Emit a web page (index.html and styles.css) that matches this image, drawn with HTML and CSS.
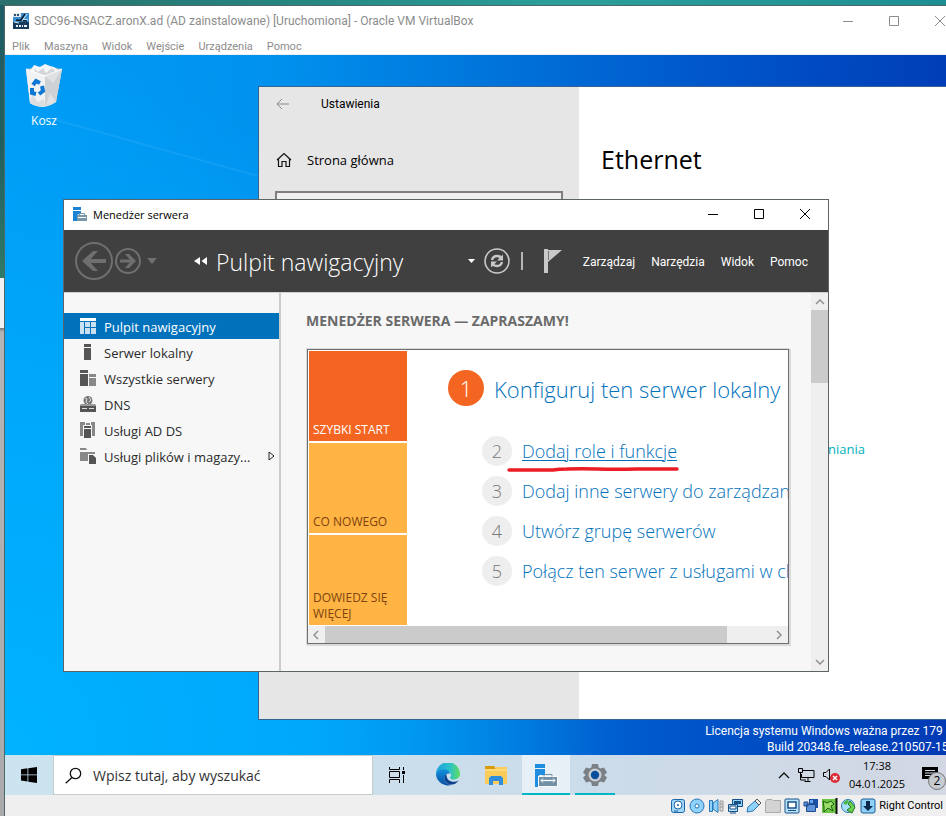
FILE: index.html
```html
<!DOCTYPE html>
<html lang="pl">
<head>
<meta charset="utf-8">
<title>Oracle VM VirtualBox</title>
<link rel="stylesheet" href="styles.css">
</head>
<body>
<div class="vm">
  <header class="vm-title">
    <svg class="vm-icon" width="16" height="16" viewBox="0 0 16 16"><rect width="16" height="16" fill="#3b8fd0"/><rect y="9" width="16" height="7" fill="#17395c"/><path d="M0 0h8v4H0z" fill="#dfe7ee"/><path d="M1 1h2v2H1zM4 1h2v2H4z" fill="#35506b"/><path d="M12 1 7 8M3 7l11 1" stroke="#0c1c2c" stroke-width="1.500"/><path d="M14 1 9 8M1 9l5 1M10 6l5 1" stroke="#cde8fa"/><path d="M3 12h2v2H3zM6 12h2v2H6zM9 12h1v2H9zM11 12h3v2h-3z" fill="#e8f2fa"/></svg>
    <h1 class="vm-name">SDC96-NSACZ.aronX.ad (AD zainstalowane) [Uruchomiona] - Oracle VM VirtualBox</h1>
    <div class="vm-buttons">
      <button aria-label="Minimalizuj"><svg width="12" height="12" viewBox="0 0 12 12"><path d="M1 6.500h10"/></svg></button>
      <button aria-label="Maksymalizuj"><svg width="12" height="12" viewBox="0 0 12 12"><path d="M1.500 1.500h9v9h-9z"/></svg></button>
      <button aria-label="Zamknij"><svg width="12" height="12" viewBox="0 0 12 12"><path d="m1 1 10 10M11 1 1 11"/></svg></button>
    </div>
  </header>
  <nav class="vm-menu">
    <button>Plik</button><button>Maszyna</button><button>Widok</button><button>Wejście</button><button>Urządzenia</button><button>Pomoc</button>
  </nav>

  <main class="desktop">
    <svg class="ray" width="260" height="70" viewBox="0 0 260 70"><path d="M20 0 258 66" stroke="#43b5ff" stroke-width="2" opacity=".25"/></svg>
    <button class="bin">
      <svg width="40" height="46" viewBox="0 0 40 46"><path d="M2 6 6 40q14 8 26-1l6-33z" fill="#e4e6e8"/><path d="M2 6 21 13 38 6 21 3z" fill="#b9c4cc"/><path d="m6 8 4-6 6 2 5-3 5 2 4 1 5 4-4 5-10 1-12-2z" fill="#f6f7f8"/><path d="m10 5 4 4 5-4 3 5 6-5 4 4-8 4-12-1z" fill="#d3d6d9"/><path d="M21 13 38 6l-6 33-11 4z" fill="#cfd2d5"/><path d="m21 13 17-7-9 14zM22 42l4-12 6 9z" fill="#dfe1e3"/><path d="M2 6 21 13v31Q12 44 6 40z" fill="#f1f2f3"/><path d="m8 31 6 8 6-3 1 8q-9 0-15-4z" fill="#dcdfe2"/><path d="m2 6 19 7 17-7" fill="none" stroke="#fff" stroke-width="1"/><g fill="none" stroke="#0f78d2" stroke-width="4"><path d="m9 22 3-4 4 2"/><path d="M18 23l1 5-4 3"/><path d="m12 31-4-1 0-5"/></g></svg>
      <span>Kosz</span>
    </button>

    <section class="settings">
      <div class="settings-side">
        <div class="settings-top">
          <button aria-label="Wstecz"><svg width="14" height="12" viewBox="0 0 14 12"><path d="M1 6h12M6 1 1 6l5 5" fill="none" stroke="#8a8a8a"/></svg></button>
          <span>Ustawienia</span>
        </div>
        <a class="home" href="#"><svg width="16" height="16" viewBox="0 0 16 16"><path d="m1 8 7-6.500L15 8M2.500 7v7.500h3.500v-5h4v5h3.500V7" fill="none" stroke="#111" stroke-width="1.200"/></svg><span>Strona główna</span></a>
        <input class="settings-find" type="text" aria-label="Znajdź ustawienie">
      </div>
      <div class="settings-page">
        <h2>Ethernet</h2>
        <a href="#">niania</a>
      </div>
    </section>

    <p class="license">Licencja systemu Windows ważna przez 179 dni<br>Build 20348.fe_release.210507-1500</p>

    <section class="manager">
      <header class="m-title">
        <svg width="15" height="15" viewBox="0 0 15 15"><path d="M0 0h8v3H0zM0 4h8v2L4 8v6H0z" fill="#1a83d6"/><path d="M4 8h10v6H4z" fill="#7796a8"/><path d="M6.500 8V6.500h5V8M5 10.500h8" fill="none" stroke="#7796a8"/><path d="M5 10.500h8" stroke="#fff"/></svg>
        <h2>Menedżer serwera</h2>
        <div class="m-buttons">
          <button aria-label="Minimalizuj"><svg width="12" height="12" viewBox="0 0 12 12"><path d="M1 6.500h10"/></svg></button>
          <button aria-label="Maksymalizuj"><svg width="12" height="12" viewBox="0 0 12 12"><path d="M1.500 1.500h9v9h-9z"/></svg></button>
          <button aria-label="Zamknij"><svg width="12" height="12" viewBox="0 0 12 12"><path d="m1 1 10 10M11 1 1 11"/></svg></button>
        </div>
      </header>
      <div class="m-bar">
        <button aria-label="Wstecz"><svg width="38" height="38" viewBox="0 0 38 38" fill="none" stroke="#6f6f6f"><circle cx="19" cy="19" r="18" stroke-width="2"/><path d="M9 19h22" stroke-width="4"/><path d="M18 9h5l-9 10 9 10h-5L7 19z" fill="#6f6f6f" stroke="none"/></svg></button>
        <button aria-label="Dalej"><svg width="26" height="26" viewBox="0 0 26 26" fill="none" stroke="#6f6f6f"><circle cx="13" cy="13" r="12" stroke-width="2"/><path d="M5 13h14" stroke-width="3"/><path d="M10 6h4l7 7-7 7h-4l6-7z" fill="#6f6f6f" stroke="none"/></svg></button>
        <button class="drop" aria-label="Historia"><svg width="10" height="6" viewBox="0 0 10 6"><path d="M0 0h10L5 6z" fill="#6f6f6f"/></svg></button>
        <svg class="crumb" width="14" height="8" viewBox="0 0 14 8"><path d="M6 0v8L0 4zM13 0v8L7.500 4z" fill="#fff"/></svg>
        <h2>Pulpit nawigacyjny</h2>
        <div class="m-tools">
          <button aria-label="Lista"><svg width="8" height="4" viewBox="0 0 8 4"><path d="M0 0h7L3.500 4z" fill="#fff"/></svg></button>
          <button class="refresh" aria-label="Odśwież"><svg width="26" height="26" viewBox="0 0 26 26" fill="none" stroke="#c8c8c8"><circle cx="13" cy="13" r="12" stroke-width="1.600"/><path d="M8 12q1-4 5-4 3 0 4.500 2M18 14q-1 4-5 4-3 0-4.500-2" stroke-width="2.400"/><path d="M19 6.500v6h-6zM7 19.500v-6h6z" fill="#c8c8c8" stroke="none"/></svg></button>
          <span class="rule"></span>
          <button class="flag" aria-label="Powiadomienia"><svg width="18" height="24" viewBox="0 0 18 24"><path d="M0 0h4v24H0zM4 1h14L4 13z" fill="#c8c8c8"/><path d="M4.500 2v9" stroke="#777"/></svg></button>
        </div>
        <nav><button>Zarządzaj</button><button>Narzędzia</button><button>Widok</button><button>Pomoc</button></nav>
      </div>
      <div class="m-body">
        <nav class="m-side">
          <a class="on" href="#"><svg width="16" height="16" viewBox="0 0 16 16"><path d="M0 0h16v3H0z" fill="#fff"/><path d="M0 4h4v12H0zM5 4h5v5H5zM11 4h5v5h-5zM5 10h5v6H5zM11 10h5v6h-5z" fill="#c9e1f2"/></svg><span>Pulpit nawigacyjny</span></a>
          <a href="#"><svg width="16" height="16" viewBox="0 0 16 16"><path d="M4 0h7v3H4zM4 4h7v12H4z" fill="#555"/></svg><span>Serwer lokalny</span></a>
          <a href="#"><svg width="16" height="16" viewBox="0 0 16 16"><path d="M0 0h8v3H0zM0 4h8v12H0z" fill="#555"/><path d="M9 4h7v3H9zM9 8h7v8H9z" fill="#888"/></svg><span>Wszystkie serwery</span></a>
          <a href="#"><svg width="16" height="16" viewBox="0 0 16 16"><circle cx="8" cy="4.500" r="4.500" fill="#777"/><path d="m5 2 2 1-1 3 2 2M9 1l2 3-2 2" fill="none" stroke="#ddd"/><path d="M1 8h14l1 1v7H0V9z" fill="#555"/><path d="M0 9h16M2 12.500h5M9 12.500h5" stroke="#ddd"/></svg><span>DNS</span></a>
          <a href="#"><svg width="16" height="16" viewBox="0 0 16 16"><path d="M0 0h5v3H3v11H0zM11 0h4v14h-3V3h-1z" fill="#888"/><path d="M4 4h7v2H4zM4 7h7v9H4z" fill="#555"/><path d="M6 1h4v2H6z" fill="#888"/></svg><span>Usługi AD DS</span></a>
          <a href="#"><svg width="16" height="16" viewBox="0 0 16 16"><path d="M0 0h6l1 2H0zM0 4h15v2H8v7H0z" fill="#888"/><path d="M9 7h4l3 3v6H9z" fill="#555"/></svg><span>Usługi plików i magazy...</span><svg class="more" width="7" height="10" viewBox="0 0 7 10"><path d="M1 1v8l5-4z" fill="none" stroke="#222"/></svg></a>
        </nav>
        <div class="m-page">
          <h3>MENEDŻER SERWERA — ZAPRASZAMY!</h3>
          <div class="welcome">
            <div class="welcome-main">
              <div class="tiles"><button class="hot">SZYBKI START</button><button>CO NOWEGO</button><button>DOWIEDZ SIĘ WIĘCEJ</button></div>
              <ol class="steps">
                <li class="first"><b>1</b><a href="#">Konfiguruj ten serwer lokalny</a></li>
                <li class="marked"><b>2</b><a href="#">Dodaj role i funkcje</a><svg class="pen" width="172" height="6" viewBox="0 0 172 6"><path d="M2 4h44q6-1 14-1 14-.5 30 0 20 .500 40 0h40" fill="none" stroke="#ec1c24" stroke-width="3.400" stroke-linecap="round"/></svg></li>
                <li><b>3</b><a href="#">Dodaj inne serwery do zarządzania</a></li>
                <li><b>4</b><a href="#">Utwórz grupę serwerów</a></li>
                <li><b>5</b><a href="#">Połącz ten serwer z usługami w chmurze</a></li>
              </ol>
            </div>
            <div class="hbar"><svg width="17" height="17" viewBox="0 0 17 17"><path d="m10 5-4 4 4 4"/></svg><i></i><svg width="17" height="17" viewBox="0 0 17 17"><path d="m6 5 4 4-4 4"/></svg></div>
          </div>
        </div>
        <div class="vbar"><svg width="17" height="17" viewBox="0 0 17 17"><path d="m5 11 4-4 4 4"/></svg><i></i><svg width="17" height="17" viewBox="0 0 17 17"><path d="m5 6 4 4 4-4"/></svg></div>
      </div>
    </section>
  </main>

  <footer class="taskbar">
    <button class="start" aria-label="Start"><svg width="16" height="16" viewBox="0 0 16 16"><path d="M0 2.200 6.500 1.300v6.200H0zM7.300 1.200 16 0v7.500H7.300zM0 8.300h6.500v6.200L0 13.600zM7.300 8.300H16V16l-8.700-1.200z"/></svg></button>
    <label class="search"><svg width="17" height="17" viewBox="0 0 17 17" fill="none" stroke="#111" stroke-width="1.300"><circle cx="10.500" cy="6.500" r="5.200"/><path d="M7 10.500.700 16.300"/></svg><input type="text" placeholder="Wpisz tutaj, aby wyszukać" aria-label="Wyszukaj"></label>
    <button class="app" aria-label="Widok zadań"><svg width="17" height="16" viewBox="0 0 17 16" fill="none" stroke="#000"><path d="M.500 0v2.500h10V0M.500 16v-3.500h10V16M.500 4.500h10v6H.500zM14.500 0v3M14.500 8v8"/><path d="M13 4h3v3h-3z" fill="#000" stroke="none"/></svg></button>
    <button class="app" aria-label="Edge"><svg width="24" height="24" viewBox="0 0 24 24"><defs><linearGradient id="e1" x1="0" x2="1"><stop offset="0" stop-color="#1d9fe0"/><stop offset=".6" stop-color="#2cc3c4"/><stop offset="1" stop-color="#62dd5c"/></linearGradient><linearGradient id="e2" x2="0" y2="1"><stop stop-color="#1290dc"/><stop offset="1" stop-color="#0b4fa3"/></linearGradient></defs><path d="M0 12a12 12 0 0 1 24-1.500c.3 4-3 6-6.500 6-3 0-4-1.500-3-2.800 1.500-2 0-6-4.500-6-5 0-9 2-10 4.300z" fill="url(#e1)"/><path d="M0 12c.5-4 5-6 9-5.500 3 .3 5 2.500 5.500 4.500-3-1.500-6 1-6 4.500 0 4 4 6.500 8 6A12 12 0 0 1 0 12z" fill="url(#e2)"/><path d="M10.500 11c-4 3-2 10 4.500 10.500 3 .3 6-1.500 7.500-4-3 1.800-7.500 1.700-10-.500-1.700-1.600-2-3.500-2-6z" fill="#0c3f8c"/></svg></button>
    <button class="app" aria-label="Eksplorator plików"><svg width="22" height="19" viewBox="0 0 22 19"><path d="M0 0h9l2 3H0z" fill="#d99a0b"/><path d="M0 3h10l1-2h11v17H0z" fill="#fccc5b"/><path d="M0 3h22v2H0z" fill="#ffdb77"/><path d="M4 19v-7l2-2h10l2 2v7h-4v-4H8v4z" fill="#2f8ddb"/></svg></button>
    <button class="app active" aria-label="Menedżer serwera"><svg width="24" height="24" viewBox="0 0 24 24"><path d="M1 1h10v4H1zM1 6h10v6H5v12H1z" fill="#1f8de0"/><path d="M4 13h20v11H4z" fill="#f8fafc"/><path d="M5 14h18v9H5z" fill="#7291a5"/><path d="M10 13.500v-2h8v2" fill="none" stroke="#7291a5"/><path d="M7 17.500h14" stroke="#fff" stroke-width="1.200"/><path d="m9 15.500-2 2 2 2M19 15.500l2 2-2 2" fill="none" stroke="#fff"/></svg></button>
    <button class="app open" aria-label="Ustawienia"><svg width="24" height="24" viewBox="0 0 24 24"><path d="M9 1h6l.7 3.600 1.800 1L21 4.400l3 5.100-2.700 2.500L24 14.500l-3 5.100-3.500-1.200-1.800 1L15 23H9l-.7-3.600-1.800-1L3 19.600l-3-5.100L2.700 12 0 9.500l3-5.100 3.500 1.200 1.800-1z" fill="#7a8085"/><circle cx="12" cy="12" r="6.500" fill="#c9ced3"/><circle cx="12" cy="12" r="4.200" fill="#0a4f9c"/></svg></button>
    <div class="tray">
      <button aria-label="Ukryte ikony"><svg width="12" height="7" viewBox="0 0 12 7"><path d="m1 6 5-5 5 5" fill="none" stroke="#111" stroke-width="1.300"/></svg></button>
      <button aria-label="Sieć"><svg width="17" height="15" viewBox="0 0 17 15"><path d="M5 2.500h11v7H3.500V6M.500.500h4v4h-4zM2.500 5v7H8M10 9.500v4M6.500 13.500h6" fill="none" stroke="#000"/></svg></button>
      <button aria-label="Głośność"><svg width="18" height="16" viewBox="0 0 18 16"><path d="M.500 5.500h2.500L6.500 2v11L3 9.500H.500z" fill="none" stroke="#000"/><circle cx="12" cy="11" r="5" fill="#dc2a35"/><path d="m10 9 4 4M14 9l-4 4" stroke="#fff" stroke-width="1.500"/></svg></button>
      <time>17:38<br>04.01.2025</time>
      <button class="notes" aria-label="Powiadomienia"><svg width="16" height="16" viewBox="0 0 16 16"><path d="M0 0h16v12h-6l-3 4v-4H0z"/><path d="M3 3.500h10M3 6h10M3 8.500h7" stroke="#d0d8e6"/></svg><em>2</em></button>
    </div>
  </footer>

  <div class="status">
    <svg viewBox="0 0 16 16"><rect x="1.500" y="1.500" width="13" height="13" rx="2" fill="#9fd6fa" stroke="#1c64a4"/><circle cx="8" cy="7" r="4" fill="#fff" stroke="#1c64a4"/><circle cx="8" cy="7" r="1" fill="#1c64a4"/><path d="M4 13h4" stroke="#1c64a4"/></svg>
    <svg viewBox="0 0 16 16"><circle cx="8" cy="8" r="7" fill="#8fd2fb" stroke="#2878b8"/><circle cx="8" cy="8" r="2" fill="#fff" stroke="#2878b8"/></svg>
    <svg viewBox="0 0 16 16"><path d="M1.500 2.500h3v11h-3zM5 5l5-3.500v13L5 11z" fill="#8fd2fb" stroke="#2878b8"/><path d="M12 3h3v10h-3zM12 6h3M12 9h3" fill="#ddd" stroke="#999"/></svg>
    <svg viewBox="0 0 16 16"><path d="M5.500 1.500h10v7h-10z" fill="#8fd2fb" stroke="#174f85"/><path d="M7 3h7v3H7z" fill="#174f85"/><path d="M1.500 6.500h9v7h-9z" fill="#b9e4fc" stroke="#174f85"/><path d="M3 8h6v3H3zM3 15h6" fill="#fff" stroke="#174f85"/></svg>
    <svg viewBox="0 0 16 16"><path d="m1 14 1-5 7-6 4 4-6 6z" fill="#8fd2fb" stroke="#2878b8"/><path d="m9 3 2-2 4 4-2 2z" fill="#eee" stroke="#555"/></svg>
    <svg viewBox="0 0 16 16"><path d="M.500 3.500 2 1.500h5l1 1h7.500v12H.500z" fill="#d3d3d3" stroke="#aaa"/></svg>
    <svg viewBox="0 0 16 16"><rect x="1" y="1" width="14" height="14" rx="1" fill="#b9e4fc" stroke="#174f85"/><path d="M4 4h8v6H4z" fill="#fff" stroke="#174f85" stroke-width="1.500"/><path d="M4 12.500h8" stroke="#174f85"/></svg>
    <svg viewBox="0 0 16 16"><path d="M6 1h9v9H6z" fill="#174fa5"/><path d="M1 4h4v4H1zM3.500 6.500h9v7h-9z" fill="#5c93dc" stroke="#1c4a8a"/><path d="M7 2h3v3H7z" fill="#6ba7ea"/></svg>
    <svg viewBox="0 0 16 16"><path d="M0 1h14v14H0z" fill="#6cc644"/><path d="m1 3 4 2 4-2 3 3-3 2 2 5-5-3-4 4V9z" fill="#9cde6b" stroke="#195c0d"/><path d="M14.500 0v16" stroke="#111" stroke-width="2"/></svg>
    <svg viewBox="0 0 16 16"><circle cx="7" cy="8" r="6.500" fill="#a7dcfa" stroke="#2c7bb0"/><path d="m2 5 4-3 2 1-3 4z" fill="#46b33a"/><path d="m9 3 5 6-3 6-5-3 4-3-3-3z" fill="#6fcf4f" stroke="#1f7a20"/></svg>
    <svg viewBox="0 0 16 16"><rect x="1" y="1" width="14" height="14" rx="2" fill="#8dd0f8" stroke="#1c5d96"/><path d="M6 3h4v5h3l-5 5-5-5h3z" fill="#0b2a4d"/></svg>
    <span>Right Control</span>
  </div>
</div>
</body>
</html>
```
FILE: styles.css
```css
* { box-sizing: border-box; }
body {
  margin: 0;
  height: 100vh;
  overflow: hidden;
  display: flex;
  padding: 5px 0 0 4px;
  font-family: "Open Sans", "Noto Sans", sans-serif;
  font-size: 12px;
  color: #000;
  background:
    linear-gradient(90deg, #2a706c, #26857f 30%, #2ba09a 60%, #1d8f93) 0 0 / 100% 5px no-repeat,
    linear-gradient(#1f5d66, #22605f 150px, #2f7a68 278px, #f2f2f2 278px, #f2f2f2 328px, #777 328px, #b5b5b5 332px, #aaa);
}
h1, h2, h3, p, ol { margin: 0; padding: 0; font-weight: 400; }
button { border: 0; padding: 0; background: none; font: inherit; color: inherit; display: flex; align-items: center; justify-content: center; }
a { color: inherit; text-decoration: none; }
svg { display: block; flex: none; }
.vm-name, .vm-menu, .license, .settings-top, .m-bar nav, .status { font-family: Roboto, "Open Sans", sans-serif; }

.vm { flex: 1; min-width: 0; display: flex; flex-direction: column; background: #fff; border: 1px solid #4c6868; border-width: 1px 0 0 1px; overflow: hidden; }
.vm-title { display: flex; align-items: center; height: 29px; padding-left: 8px; color: #8c8c8c; }
.vm-name { font-size: 12px; line-height: 16px; margin-left: 5px; white-space: nowrap; }
.vm-buttons { display: flex; margin-left: auto; gap: 34px; }
.vm-buttons svg { stroke: #8d8d8d; fill: none; }
.vm-menu { display: flex; gap: 14px; height: 20px; padding-top: 4px; padding-left: 7px; color: #8c8c8c; font-size: 11px; border-bottom: 1px solid #eee; }

.desktop {
  position: relative; flex: 1; min-height: 0; overflow: hidden;
  background:
    radial-gradient(ellipse 600px 700px at 0 100%, #00b2ff, #00a8fb 50%, transparent),
    linear-gradient(93deg, #009bf5, #0092ee 27%, #0074da 50%, #0054c9 74%, #003ab4);
}
.ray { position: absolute; left: 20px; top: 62px; }
.bin { position: absolute; left: 4px; top: 8px; width: 70px; flex-direction: column; gap: 3px; color: #fff; line-height: 18px; }

.settings { position: absolute; left: 253px; top: 31px; right: 0; height: 634px; display: flex; border: 1px solid #37648f; border-width: 1px 0 1px 1px; background: #fff; }
.settings-side { width: 320px; background: #e6e6e6; }
.settings-top { display: flex; align-items: center; height: 33px; padding-left: 17px; gap: 31px; }
.home { display: flex; align-items: center; gap: 15px; height: 24px; margin: 28px 0 19px 17px; font-size: 13px; }
.settings-find { display: block; margin-left: 16px; width: 288px; height: 32px; border: 2px solid #7f7f7f; background: #f0f0f0; }
.settings-page { padding: 54px 0 0 22px; }
.settings-page h2 { font-size: 25px; line-height: 36px; }
.settings-page a { display: block; margin: 262px 0 0 227px; line-height: 20px; font-size: 13px; color: #00b0bc; }
.license { position: absolute; right: -16px; bottom: 0; color: #fff; text-align: right; line-height: 16px; white-space: nowrap; }

.manager { position: absolute; left: 58px; top: 144px; width: 766px; border: 1px solid #5d6468; background: #f7f7f7; }
.m-title { display: flex; align-items: center; height: 30px; padding: 0 0 2px 9px; background: #fff; }
.m-title h2 { margin-left: 5px; font-size: 11px; }
.m-buttons { display: flex; gap: 34px; margin: 0 17px 0 auto; }
.m-buttons svg { stroke: #000; fill: none; }
.m-bar { display: flex; align-items: center; height: 62px; padding: 0 20px 0 11px; background: #404040; color: #fff; }
.m-bar > button + button { margin-left: 2px; }
.m-bar .drop { margin-left: 6px; }
.crumb { margin-left: 37px; }
.m-bar h2 { margin-left: 8px; padding-top: 2px; font-size: 23px; font-weight: 300; line-height: 32px; white-space: nowrap; }
.m-tools { display: flex; align-items: center; margin-left: auto; margin-right: 21px; }
.refresh { margin-left: 8px; }
.rule { width: 2px; height: 18px; margin: 0 21px 0 11px; background: #b5b5b5; }
.m-bar nav { display: flex; gap: 16px; padding-top: 2px; }
.m-body { display: flex; height: 379px; border-top: 1px solid #d0d0d0; }
.m-side { width: 217px; padding-top: 20px; border-right: 2px solid #ccc; font-size: 13px; color: #2b2b2b; }
.m-side a { display: flex; align-items: center; height: 26px; padding-left: 16px; gap: 8px; white-space: nowrap; }
.m-side span { padding-top: 2px; }
.m-side .on { background: #0072bc; color: #fff; }
.more { margin: 0 4px 0 auto; }
.m-page { flex: 1; min-width: 0; padding: 17px 20px 0 25px; }
.m-page h3 { font-size: 14px; line-height: 22px; font-weight: 700; color: #6a6a6a; }
.welcome { margin: 17px 2px 0 1px; border: 1px solid #6e6e6e; background: #fff; box-shadow: 0 0 0 1px #dadada, 1px 1px 0 1px #dadada; }
.welcome-main { display: flex; overflow: hidden; padding: 1px; }
.tiles { flex: none; width: 98px; display: grid; gap: 2px; grid-auto-rows: 90px; }
.tiles button { align-items: flex-end; justify-content: flex-start; text-align: left; padding: 0 4px 3px; line-height: 16px; background: #ffb443; color: #7d4310; }
.tiles .hot { background: #f56522; color: #fff; }
.steps { list-style: none; padding: 20px 0 0 75px; font-weight: 300; font-size: 18px; color: #0072bc; white-space: nowrap; }
.steps li { position: relative; display: flex; align-items: center; gap: 10px; height: 40px; }
.steps b { flex: none; width: 30px; height: 30px; border-radius: 50%; background: #eee; color: #777; font-weight: 300; line-height: 30px; text-align: center; }
.steps .first { height: 36px; margin: -1px 0 25px -34px; font-size: 22px; }
.first b { width: 36px; height: 36px; line-height: 36px; background: #f56522; color: #fff; }
.steps .first b { width: 36px; height: 36px; line-height: 36px; background: #f56522; color: #fff; }
.steps .first a { padding-top: 2px; }
.marked a { text-decoration: underline; text-decoration-thickness: 1px; text-underline-offset: 2px; }
.pen { position: absolute; left: 25px; bottom: -1px; }
.hbar, .vbar { display: flex; background: #efefef; }
.hbar svg, .vbar svg { fill: none; stroke: #8c8c8c; stroke-width: 1.400; }
.hbar i { width: 402px; margin-right: auto; background: #cbcbcb; }
.vbar { width: 17px; flex-direction: column; }
.vbar i { height: 73px; margin-bottom: auto; background: #cbcbcb; }

.taskbar { display: flex; height: 40px; background: linear-gradient(90deg, #cbe4f0, #cbdcea 60%, #d2d7e3); }
.start { width: 48px; }
.search { display: flex; align-items: center; width: 320px; padding-left: 11px; gap: 11px; background: #fff; border: 1px solid #c6cbce; }
.search input { flex: 1; min-width: 0; border: 0; outline: 0; padding: 0; font: 14px "Open Sans", sans-serif; }
.search input::placeholder { color: #333; opacity: 1; }
.app { width: 48px; border-bottom: 2px solid transparent; padding-top: 2px; }
.search + .app { margin-right: 3px; }
.active { background: #e8f0f7; border-color: #00b7c3; margin-right: 5px; margin-left: 2px; }
.open { width: 40px; border-color: #00b7c3; }
.tray { display: flex; align-items: center; gap: 8px; margin-left: auto; }
.tray time { text-align: center; font-size: 11px; line-height: 18px; }
.notes { position: relative; width: 33px; }
.notes em { position: absolute; left: 15px; top: 5px; width: 18px; height: 18px; border: 1px solid #777; border-radius: 50%; background: #c6cbd2; font-style: normal; line-height: 16px; }
.status { display: flex; align-items: center; justify-content: flex-end; gap: 3px; height: 21px; padding-right: 3px; background: #efefef; font-size: 11px; white-space: nowrap; }
.status svg { width: 16px; height: 16px; }
```
